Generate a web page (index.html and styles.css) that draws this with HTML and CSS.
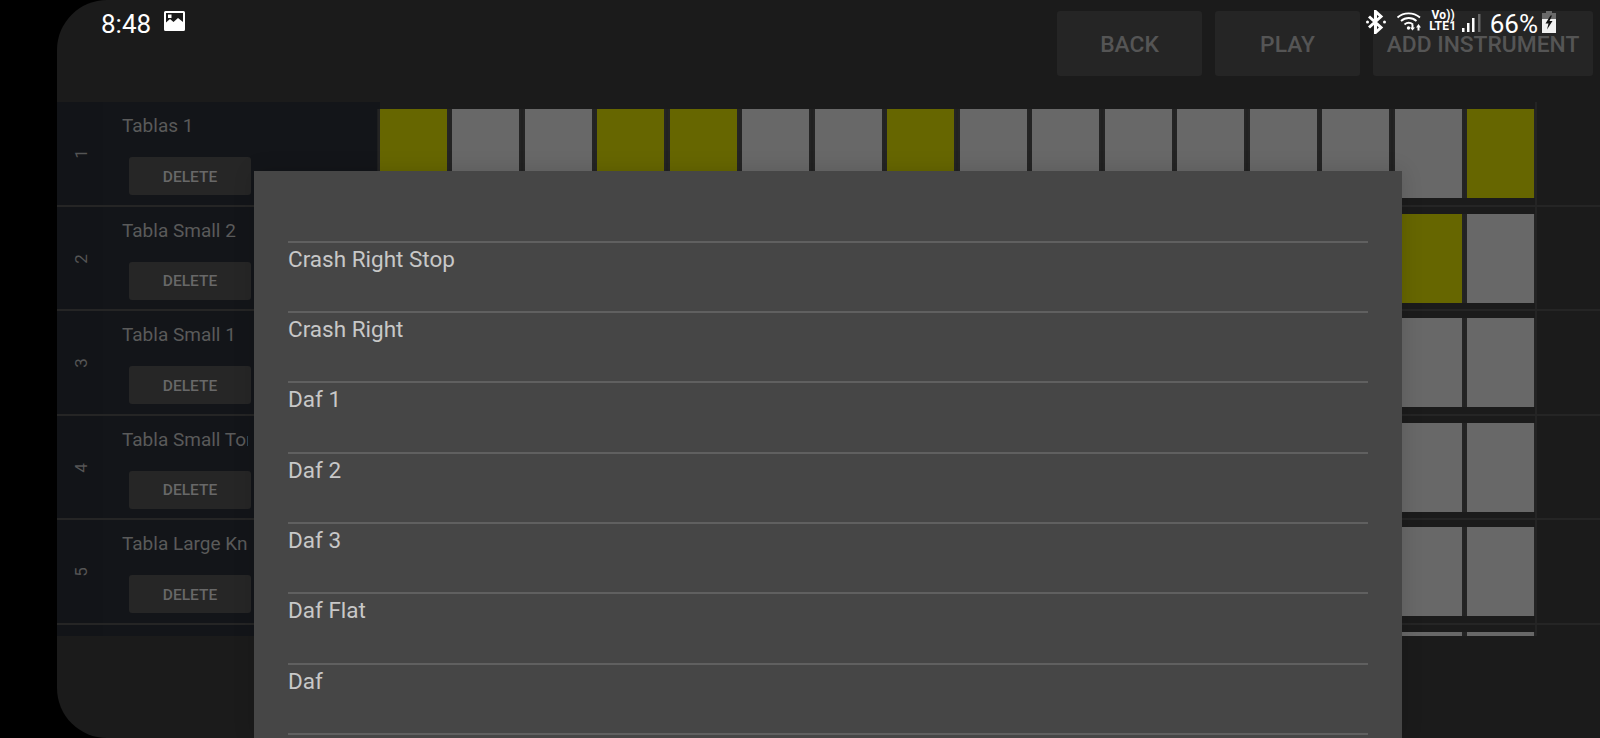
FILE: index.html
```html
<!DOCTYPE html>
<html lang="en">
<head>
<meta charset="utf-8">
<title>Sequencer</title>
<link rel="stylesheet" href="styles.css">
</head>
<body>
<div class="app">
  <header class="toolbar">
    <button class="tool-btn btn-back">BACK</button>
    <button class="tool-btn btn-play">PLAY</button>
    <button class="tool-btn btn-add">ADD INSTRUMENT</button>
  </header>
  <main class="tracks">
    <section class="track">
      <div class="track-num"><span>1</span></div>
      <div class="track-info"><div class="track-name">Tablas 1</div><button class="del-btn">DELETE</button></div>
      <div class="steps"><i class="step on"></i><i class="step"></i><i class="step"></i><i class="step on"></i><i class="step on"></i><i class="step"></i><i class="step"></i><i class="step on"></i><i class="step"></i><i class="step"></i><i class="step"></i><i class="step"></i><i class="step"></i><i class="step"></i><i class="step"></i><i class="step on"></i></div>
    </section>
    <section class="track">
      <div class="track-num"><span>2</span></div>
      <div class="track-info"><div class="track-name">Tabla Small 2</div><button class="del-btn">DELETE</button></div>
      <div class="steps"><i class="step"></i><i class="step"></i><i class="step"></i><i class="step"></i><i class="step"></i><i class="step"></i><i class="step"></i><i class="step"></i><i class="step"></i><i class="step"></i><i class="step"></i><i class="step"></i><i class="step"></i><i class="step"></i><i class="step on"></i><i class="step"></i></div>
    </section>
    <section class="track">
      <div class="track-num"><span>3</span></div>
      <div class="track-info"><div class="track-name">Tabla Small 1</div><button class="del-btn">DELETE</button></div>
      <div class="steps"><i class="step"></i><i class="step"></i><i class="step"></i><i class="step"></i><i class="step"></i><i class="step"></i><i class="step"></i><i class="step"></i><i class="step"></i><i class="step"></i><i class="step"></i><i class="step"></i><i class="step"></i><i class="step"></i><i class="step"></i><i class="step"></i></div>
    </section>
    <section class="track">
      <div class="track-num"><span>4</span></div>
      <div class="track-info"><div class="track-name">Tabla Small Tone</div><button class="del-btn">DELETE</button></div>
      <div class="steps"><i class="step"></i><i class="step"></i><i class="step"></i><i class="step"></i><i class="step"></i><i class="step"></i><i class="step"></i><i class="step"></i><i class="step"></i><i class="step"></i><i class="step"></i><i class="step"></i><i class="step"></i><i class="step"></i><i class="step"></i><i class="step"></i></div>
    </section>
    <section class="track">
      <div class="track-num"><span>5</span></div>
      <div class="track-info"><div class="track-name">Tabla Large Knock</div><button class="del-btn">DELETE</button></div>
      <div class="steps"><i class="step"></i><i class="step"></i><i class="step"></i><i class="step"></i><i class="step"></i><i class="step"></i><i class="step"></i><i class="step"></i><i class="step"></i><i class="step"></i><i class="step"></i><i class="step"></i><i class="step"></i><i class="step"></i><i class="step"></i><i class="step"></i></div>
    </section>
    <section class="track">
      <div class="track-num"></div>
      <div class="track-info"></div>
      <div class="steps"><i class="step"></i><i class="step"></i><i class="step"></i><i class="step"></i><i class="step"></i><i class="step"></i><i class="step"></i><i class="step"></i><i class="step"></i><i class="step"></i><i class="step"></i><i class="step"></i><i class="step"></i><i class="step"></i><i class="step"></i><i class="step"></i></div>
    </section>
  </main>
</div>

<div class="modal">
  <ul class="picker">
    <li>Crash Right Stop</li>
    <li>Crash Right</li>
    <li>Daf 1</li>
    <li>Daf 2</li>
    <li>Daf 3</li>
    <li>Daf Flat</li>
    <li>Daf</li>
    <li></li>
  </ul>
</div>

<div class="statusbar">
  <div class="status-left">
    <span class="clock">8:48</span>
    <svg class="ic-image" viewBox="0 0 21 20"><path fill="#fff" fill-rule="evenodd" d="M1.5 0h18A1.5 1.5 0 0 1 21 1.500v17a1.500 1.500 0 0 1-1.500 1.500h-18A1.500 1.500 0 0 1 0 18.500v-17A1.500 1.500 0 0 1 1.500 0zM2 2v9.500l4-3.500 3.500 3 4.500-4 5 4V2z"/><rect x="4" y="3.500" width="3.500" height="3.500" fill="#fff"/></svg>
  </div>
  <div class="status-right">
    <svg class="ic-bt" viewBox="0 0 20 24"><path fill="none" stroke="#fff" stroke-width="3" stroke-linejoin="miter" d="M3 6.500l12 11-5.500 5V1.500l5.500 5-12 11"/><circle cx="1.500" cy="12" r="1.500" fill="#fff"/><circle cx="18.500" cy="12" r="1.500" fill="#fff"/></svg>
    <svg class="ic-wifi" viewBox="0 0 25 20"><g fill="none" stroke="#fff" stroke-width="1.800"><path d="M1 6.500C7 1 17 1 23.500 6.500"/><path d="M4.500 10C9 6 15.500 6 20 10"/><path d="M8 13.500c2.500-2 6-2 8.500 0"/></g><circle cx="12" cy="17" r="1.700" fill="#fff"/><path fill="#fff" d="M15 13.500h2v3h1.500l-2.500 3-2.500-3H15zM21 19.500h2v-3h1.500L22 13l-2.500 3.500H21z"/></svg>
    <div class="net"><span class="net-vo">Vo))</span><span>LTE1</span></div>
    <svg class="ic-signal" viewBox="0 0 20 18"><rect x="0" y="14" width="2.500" height="4" fill="#fff"/><rect x="5" y="9" width="2.500" height="9" fill="#fff"/><rect x="10" y="4" width="2.500" height="14" fill="#fff"/><rect x="16" y="0" width="2.500" height="18" fill="#666"/></svg>
    <span class="battery-pct">66%</span>
    <svg class="ic-batt" viewBox="0 0 14 22"><rect x="4" y="0" width="6" height="3" fill="#6a6a6a"/><rect x="0" y="2" width="14" height="6" fill="#6a6a6a"/><rect x="0" y="8" width="14" height="14" fill="#f0f0f0"/><path fill="#111" d="M8.500 4.500L3.500 12.500h3l-1.500 6 5.500-8.500h-3l2.500-5.500z"/></svg>
  </div>
</div>
</body>
</html>
```

FILE: styles.css
```css
* { box-sizing: border-box; }
html, body { margin: 0; height: 100%; }
body {
  width: 1600px;
  height: 738px;
  background: #000;
  overflow: hidden;
  position: relative;
  font-family: Roboto, "Liberation Sans", sans-serif;
}
.app {
  margin-left: 57px;
  width: 1543px;
  height: 738px;
  background: #1b1b1b;
  border-radius: 50px 0 0 50px;
  overflow: hidden;
  display: flex;
  flex-direction: column;
}
.toolbar {
  height: 102px;
  flex: none;
  display: flex;
  align-items: flex-start;
  padding: 11px 7px 0 0;
  justify-content: flex-end;
  gap: 13px;
}
.tool-btn {
  height: 65px;
  border: 0;
  border-radius: 3px;
  background: #252525;
  color: #555;
  font: 500 22.800px Roboto, sans-serif;
  padding: 2px 0 0;
}
.btn-back, .btn-play { width: 145px; }
.btn-add { width: 220px; white-space: nowrap; }
.tracks {
  height: 534px;
  flex: none;
  overflow: hidden;
}
.track {
  display: flex;
  height: 104.500px;
  position: relative;
}
.track::after {
  content: "";
  position: absolute;
  left: 0;
  right: 0;
  bottom: 0;
  height: 2px;
  background: #252525;
}
.track-num {
  width: 46px;
  flex: none;
  background: #121418;
  display: flex;
  align-items: center;
  justify-content: center;
  color: #555;
  font-size: 17px;
}
.track-num span { transform: translateX(1px) rotate(-90deg); }
.track-info {
  width: 277px;
  flex: none;
  background: #131519;
  padding: 12px 0 0 19px;
}
.track-name {
  width: 126px;
  overflow: hidden;
  color: #5a5a5a;
  font-size: 19px;
  line-height: 23px;
  white-space: nowrap;
}
.del-btn {
  display: block;
  margin: 20px 0 0 7px;
  width: 122px;
  height: 38px;
  border: 0;
  border-radius: 3px;
  background: #262626;
  color: #686868;
  font: 500 15.500px Roboto, sans-serif;
  padding: 1px 0 0;
}
.steps {
  display: flex;
  gap: 5.470px;
  padding-top: 7px;
  width: 1157px;
  border-right: 2px solid #242424;
}
.step {
  display: block;
  width: 67px;
  height: 89px;
  flex: none;
  background: #686868;
  box-shadow: 2.700px 0 0 #242424, -2.700px 0 0 #242424;
}
.step.on { background: #666600; }
.modal {
  position: absolute;
  left: 254px;
  top: 171px;
  width: 1148px;
  height: 567px;
  background: #464646;
  padding: 0 34px;
  box-shadow: 0 0 20px rgba(0, 0, 0, 0.14);
  overflow: hidden;
}
.picker {
  list-style: none;
  margin: 0;
  padding: 69.500px 0 0;
}
.picker li {
  height: 70.400px;
  border-top: 2px solid #606060;
  color: #c8c8c8;
  font-size: 22.500px;
  line-height: 32px;
}
.statusbar {
  position: absolute;
  left: 57px;
  right: 0;
  top: 0;
  height: 44px;
  display: flex;
  justify-content: space-between;
  padding: 10px 44px 0 44px;
  color: #fff;
}
.status-left, .status-right { display: flex; align-items: flex-start; }
.clock { font-size: 26px; line-height: 28px; }
.ic-image { width: 21px; height: 20px; margin: 1px 0 0 13px; }
.ic-bt { width: 20px; height: 24px; }
.ic-wifi { width: 26px; height: 20px; margin: 1px 0 0 10px; }
.net {
  display: flex;
  flex-direction: column;
  align-items: center;
  width: 26px;
  margin: 0 0 0 8px;
  font: 700 12px/11px Roboto, sans-serif;
  letter-spacing: 0.200px;
}
.net-vo { margin-left: 1px; }
.ic-signal { width: 20px; height: 18px; margin: 4px 0 0 6px; }
.battery-pct { font-size: 26px; line-height: 28px; margin-left: 8px; }
.ic-batt { width: 14px; height: 22px; margin: 1px 0 0 4px; }
```
